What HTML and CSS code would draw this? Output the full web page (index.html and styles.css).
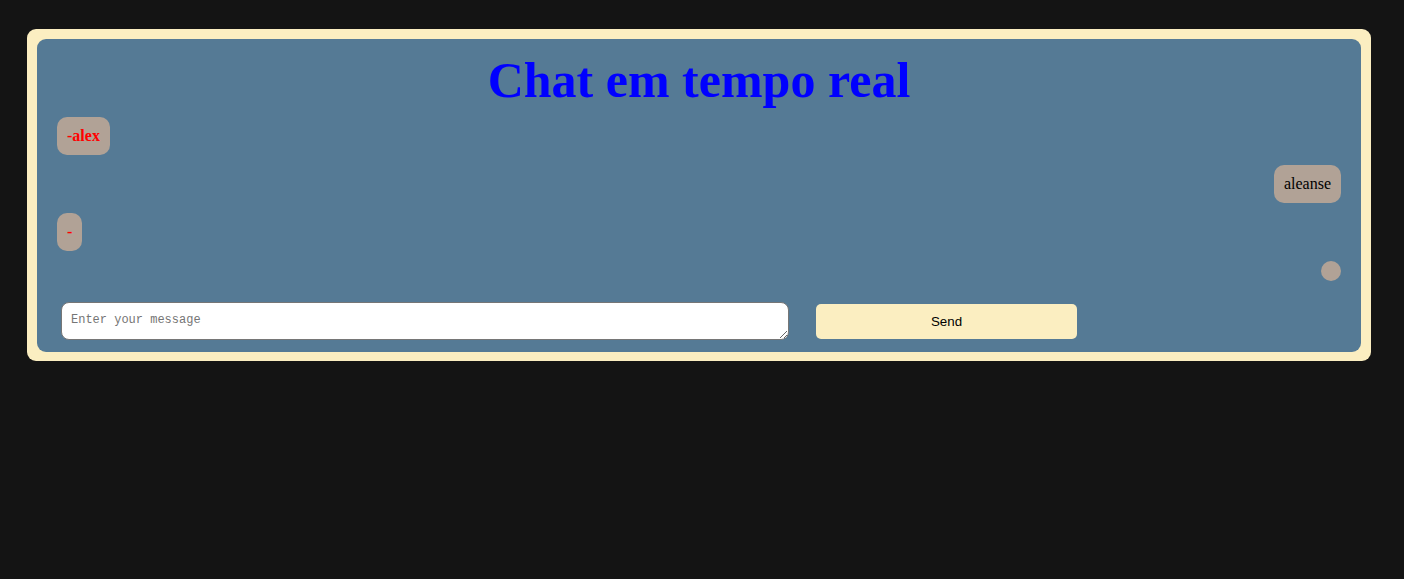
FILE: index.html
```
<!DOCTYPE html>
<html lang="pt">
<head>
<meta charset="utf-8">
<title>Chat em tempo real</title>
<link rel="stylesheet" href="styles.css">
</head>
<body>
<div class="frame">
  <div class="chat">
    <h1 class="title">Chat em tempo real</h1>
    <div class="messages">
      <div class="msg msg-left"><span class="bubble bubble-user">-alex</span></div>
      <div class="msg msg-right"><span class="bubble">aleanse</span></div>
      <div class="msg msg-left"><span class="bubble bubble-user">-</span></div>
      <div class="msg msg-right"><span class="bubble bubble-empty"></span></div>
    </div>
    <form class="composer">
      <textarea class="input" placeholder="Enter your message"></textarea>
      <button type="button" class="send">Send</button>
    </form>
  </div>
</div>
</body>
</html>
```

FILE: styles.css
```
html, body {
  margin: 0;
  background: #141414;
}
body {
  padding: 29px 33px 0 27px;
  font-family: "Liberation Serif", "Times New Roman", serif;
}
.frame {
  background: #fbeec1;
  border-radius: 9px;
  padding: 10px 10px 9px 10px;
}
.chat {
  background: #557a95;
  border-radius: 9px;
  padding: 13px 20px 12px 20px;
}
.title {
  margin: 0 0 9px 0;
  font-size: 50px;
  line-height: 56px;
  font-weight: bold;
  color: #0000ff;
  text-align: center;
}
.messages {
  display: flex;
  flex-direction: column;
  gap: 10px;
}
.msg {
  display: flex;
}
.msg-left { justify-content: flex-start; }
.msg-right { justify-content: flex-end; }
.bubble {
  display: block;
  background: #b1a296;
  border-radius: 10px;
  padding: 10px;
  font-size: 16px;
  line-height: 18px;
  color: #000;
}
.bubble-user {
  color: #ff0000;
  font-weight: bold;
}
.bubble-empty {
  width: 0;
  height: 0;
}
.composer {
  display: flex;
  align-items: center;
  gap: 27px;
  margin: 21px 0 0 0;
  padding-left: 4px;
}
.input {
  box-sizing: border-box;
  width: 728px;
  height: 38px;
  margin: 0;
  padding: 10px 9px;
  border: 1px solid #767676;
  border-radius: 8px;
  background: #fff;
  font-family: "Liberation Mono", "DejaVu Sans Mono", monospace;
  font-size: 12px;
  line-height: 15px;
  display: block;
}
.input::placeholder {
  color: #757575;
}
.send {
  width: 261px;
  height: 35px;
  margin: 0;
  border: none;
  border-radius: 5px;
  background: #fbeec1;
  color: #000;
  font-family: "Liberation Sans", Arial, sans-serif;
  font-size: 13.33px;
}
```
